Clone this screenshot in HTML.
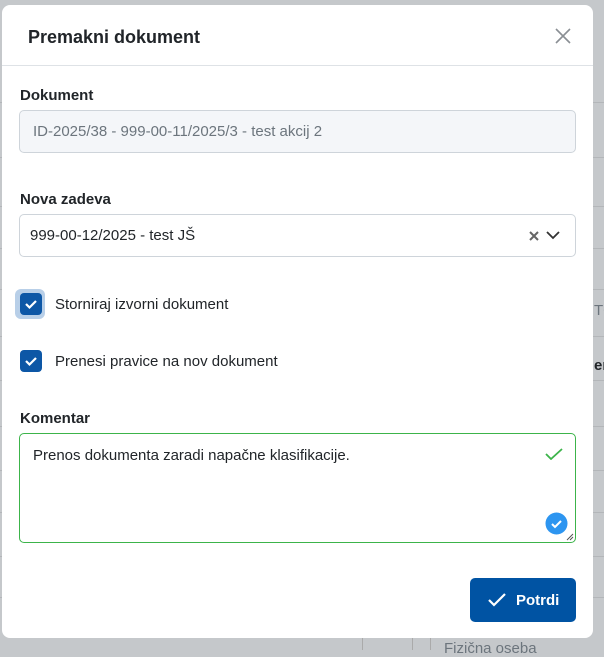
<!DOCTYPE html>
<html><head><meta charset="utf-8"><style>
*{box-sizing:border-box}
body{margin:0;width:604px;height:650px;background:#c5c8cb;font-family:"Liberation Sans",sans-serif;position:relative;overflow:hidden;color:#212529}
.bgl{position:absolute;left:0;height:1px;background:#b3b6b9;width:604px}
.modal{position:absolute;left:2px;top:5px;width:591px;height:633px;background:#fff;border-radius:8px}
.hdr{height:61px;border-bottom:1px solid #dee2e6;position:relative}
.hdr h1{margin:0;position:absolute;left:26px;top:22px;font-size:18px;font-weight:600;color:#212529}
.close{position:absolute;left:552px;top:22px}
.lbl{position:absolute;left:18px;font-size:15px;font-weight:600}
.inp{position:absolute;left:17px;width:557px;border:1px solid #ced4da;border-radius:5px;font-size:15px}
.cb{position:absolute;left:18px;width:22px;height:22px;background:#0d57a6;border-radius:4px}
.cbt{position:absolute;left:53px;font-size:15px}
.btn{position:absolute;left:468px;top:573px;width:106px;height:44px;background:#0053a3;border-radius:5px;color:#fff;font-weight:700;font-size:15px}
</style></head><body>
<div class="bgl" style="top:102px"></div>
<div class="bgl" style="top:157px"></div>
<div class="bgl" style="top:206px"></div>
<div class="bgl" style="top:248px"></div>
<div class="bgl" style="top:289px"></div>
<div class="bgl" style="top:336px"></div>
<div class="bgl" style="top:380px"></div>
<div class="bgl" style="top:426px"></div>
<div class="bgl" style="top:470px"></div>
<div class="bgl" style="top:512px"></div>
<div class="bgl" style="top:556px"></div>
<div class="bgl" style="top:597px"></div>
<div style="position:absolute;left:594px;top:302px;font-size:15px;color:#6c757d">TC</div>
<div style="position:absolute;left:594px;top:357px;font-size:15px;font-weight:700">er</div>
<div style="position:absolute;left:444px;top:640px;font-size:15px;color:#6c757d">Fizična oseba</div>
<div style="position:absolute;left:362px;top:638px;width:1px;height:12px;background:#aaa"></div>
<div style="position:absolute;left:412px;top:638px;width:1px;height:12px;background:#aaa"></div>
<div style="position:absolute;left:430px;top:638px;width:1px;height:12px;background:#aaa"></div>
<div class="modal">
 <div class="hdr"><h1>Premakni dokument</h1>
  <svg class="close" width="18" height="18" viewBox="0 0 18 18"><path d="M2 2L16 16M16 2L2 16" stroke="#8a8f94" stroke-width="1.6"/></svg></div>
 <div class="lbl" style="top:82px">Dokument</div>
 <div class="inp" style="top:105px;height:43px;background:#f4f6f9;color:#6c757d;padding:12px 13px">ID-2025/38 - 999-00-11/2025/3 - test akcij 2</div>
 <div class="lbl" style="top:186px">Nova zadeva</div>
 <div class="inp" style="top:209px;height:43px;padding:12px 10px">999-00-12/2025 - test JŠ
  <svg style="position:absolute;left:509px;top:16px" width="10" height="10" viewBox="0 0 10 10"><path d="M1 1L9 9M9 1L1 9" stroke="#666" stroke-width="2"/></svg>
  <svg style="position:absolute;left:526px;top:16px" width="14" height="9" viewBox="0 0 14 9"><path d="M1 1L7 7L13 1" stroke="#333" stroke-width="1.8" fill="none"/></svg></div>
 <div style="position:absolute;left:13px;top:284px;width:30px;height:30px;border-radius:6px;background:#b8cfe8"></div>
 <div class="cb" style="top:288px"><svg width="22" height="22" viewBox="0 0 22 22"><path d="M6 11L9.5 14.5L16 8" stroke="#fff" stroke-width="2.2" fill="none"/></svg></div>
 <div class="cbt" style="top:291px">Storniraj izvorni dokument</div>
 <div class="cb" style="top:345px"><svg width="22" height="22" viewBox="0 0 22 22"><path d="M6 11L9.5 14.5L16 8" stroke="#fff" stroke-width="2.2" fill="none"/></svg></div>
 <div class="cbt" style="top:348px">Prenesi pravice na nov dokument</div>
 <div class="lbl" style="top:405px">Komentar</div>
 <div class="inp" style="top:428px;height:110px;border-color:#3cb44a;padding:13px 13px">Prenos dokumenta zaradi napačne klasifikacije.
  <svg style="position:absolute;left:525px;top:14px" width="18" height="12" viewBox="0 0 18 12"><path d="M1 6L6 11L17 1" stroke="#3cb44a" stroke-width="1.8" fill="none"/></svg>
  <svg style="position:absolute;left:525px;top:78px" width="23" height="23" viewBox="0 0 23 23"><circle cx="11.5" cy="11.5" r="11" fill="#2d95f0"/><path d="M7 12L10 15L16 9" stroke="#fff" stroke-width="2" fill="none"/></svg>
  <svg style="position:absolute;left:545px;top:98px" width="9" height="9" viewBox="0 0 9 9"><path d="M8 2L2 8M8 5L5 8" stroke="#555" stroke-width="1"/></svg></div>
 <div class="btn"><svg style="position:absolute;left:18px;top:15px" width="18" height="14" viewBox="0 0 18 14"><path d="M1 7L6 12L17 1" stroke="#fff" stroke-width="2.2" fill="none"/></svg><span style="position:absolute;left:46px;top:14px">Potrdi</span></div>
</div>
</body></html>
